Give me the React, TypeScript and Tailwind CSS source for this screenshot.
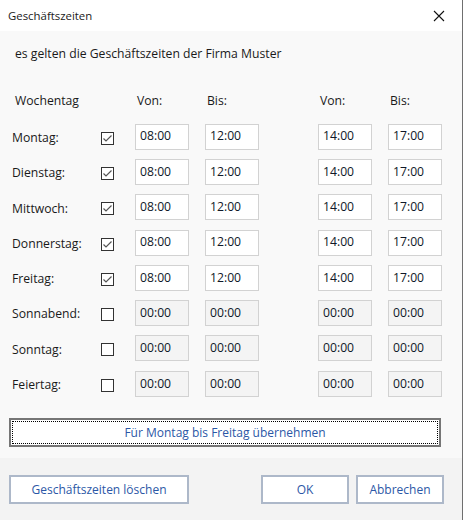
import React from "react";

const rows = [
  { day: "Montag:", on: true },
  { day: "Dienstag:", on: true },
  { day: "Mittwoch:", on: true },
  { day: "Donnerstag:", on: true },
  { day: "Freitag:", on: true },
  { day: "Sonnabend:", on: false },
  { day: "Sonntag:", on: false },
  { day: "Feiertag:", on: false },
];

function Box({ value, on }: { value: string; on: boolean }) {
  return (
    <div
      className={
        "w-[54px] h-[26px] border flex items-center pl-[4px] text-[12.2px] text-[#101828] " +
        (on ? "bg-white border-[#d2d2d2]" : "bg-[#f4f4f4] border-[#d2d2d2]")
      }
    >
      {value}
    </div>
  );
}

function Check({ on }: { on: boolean }) {
  return (
    <div className="w-[13px] h-[13px] border border-[#333333] bg-white flex items-center justify-center">
      {on && (
        <svg width="11" height="11" viewBox="0 0 11 11">
          <path d="M1.5 5.5 L4 8 L9.5 2.5" fill="none" stroke="#555555" strokeWidth="1.2" />
        </svg>
      )}
    </div>
  );
}

export default function App() {
  return (
    <div className="w-[463px] h-[520px] flex flex-col bg-[#f9f9f9] border-r border-[#6f6f6f] font-['Open_Sans','Noto_Sans',sans-serif] text-[#1a1a1a] overflow-hidden">
      <div className="h-[31px] bg-white flex items-center justify-between pl-[8px] pr-[17px] shrink-0">
        <span className="text-[11.4px]">Geschäftszeiten</span>
        <svg width="12" height="12" viewBox="0 0 12 12">
          <path d="M1 1 L11 11 M11 1 L1 11" stroke="#111" strokeWidth="1.1" />
        </svg>
      </div>
      <div className="flex-1 flex flex-col">
        <div className="h-[42px] pl-[15px] pt-[14px] text-[12.2px]">
          <div className="h-[18px] flex items-center">es gelten die Geschäftszeiten der Firma Muster</div>
        </div>
        <div className="flex items-center h-[20px] mt-[18px] text-[12.2px]">
          <span className="pl-[15px] w-[137px]">Wochentag</span>
          <span className="w-[70px]">Von:</span>
          <span className="w-[113px]">Bis:</span>
          <span className="w-[70px]">Von:</span>
          <span>Bis:</span>
        </div>
        <div className="flex flex-col pt-[8px]">
          {rows.map((r) => (
            <div key={r.day} className="flex items-center h-[35.3px] pl-[12px]">
              <span className="w-[89px] text-[12.2px] pt-[3px]">{r.day}</span>
              <div className="w-[34px] pt-[3px]">
                <Check on={r.on} />
              </div>
              <Box value={r.on ? "08:00" : "00:00"} on={r.on} />
              <div className="w-[16px]" />
              <Box value={r.on ? "12:00" : "00:00"} on={r.on} />
              <div className="w-[59px]" />
              <Box value={r.on ? "14:00" : "00:00"} on={r.on} />
              <div className="w-[16px]" />
              <Box value={r.on ? "17:00" : "00:00"} on={r.on} />
            </div>
          ))}
        </div>
        <div className="pl-[9px] pt-[17px]">
          <button className="w-[432px] h-[29px] border-2 border-[#767676] bg-white p-[1px] text-[12px] text-[#2b57a6]">
            <div className="w-full h-full border border-dotted border-black flex items-center justify-center">
              Für Montag bis Freitag übernehmen
            </div>
          </button>
        </div>
      </div>
      <div className="h-[62px] bg-[#f3f3f3] shrink-0 flex items-start pt-[17px] pl-[9px] text-[12px] text-[#2b57a6]">
        <button className="w-[180px] h-[29px] border-2 border-[#adb8c9] bg-white">Geschäftszeiten löschen</button>
        <button className="ml-[72px] w-[88px] h-[29px] border-2 border-[#adb8c9] bg-white">OK</button>
        <button className="ml-[7px] w-[88px] h-[29px] border-2 border-[#adb8c9] bg-white">Abbrechen</button>
      </div>
    </div>
  );
}
